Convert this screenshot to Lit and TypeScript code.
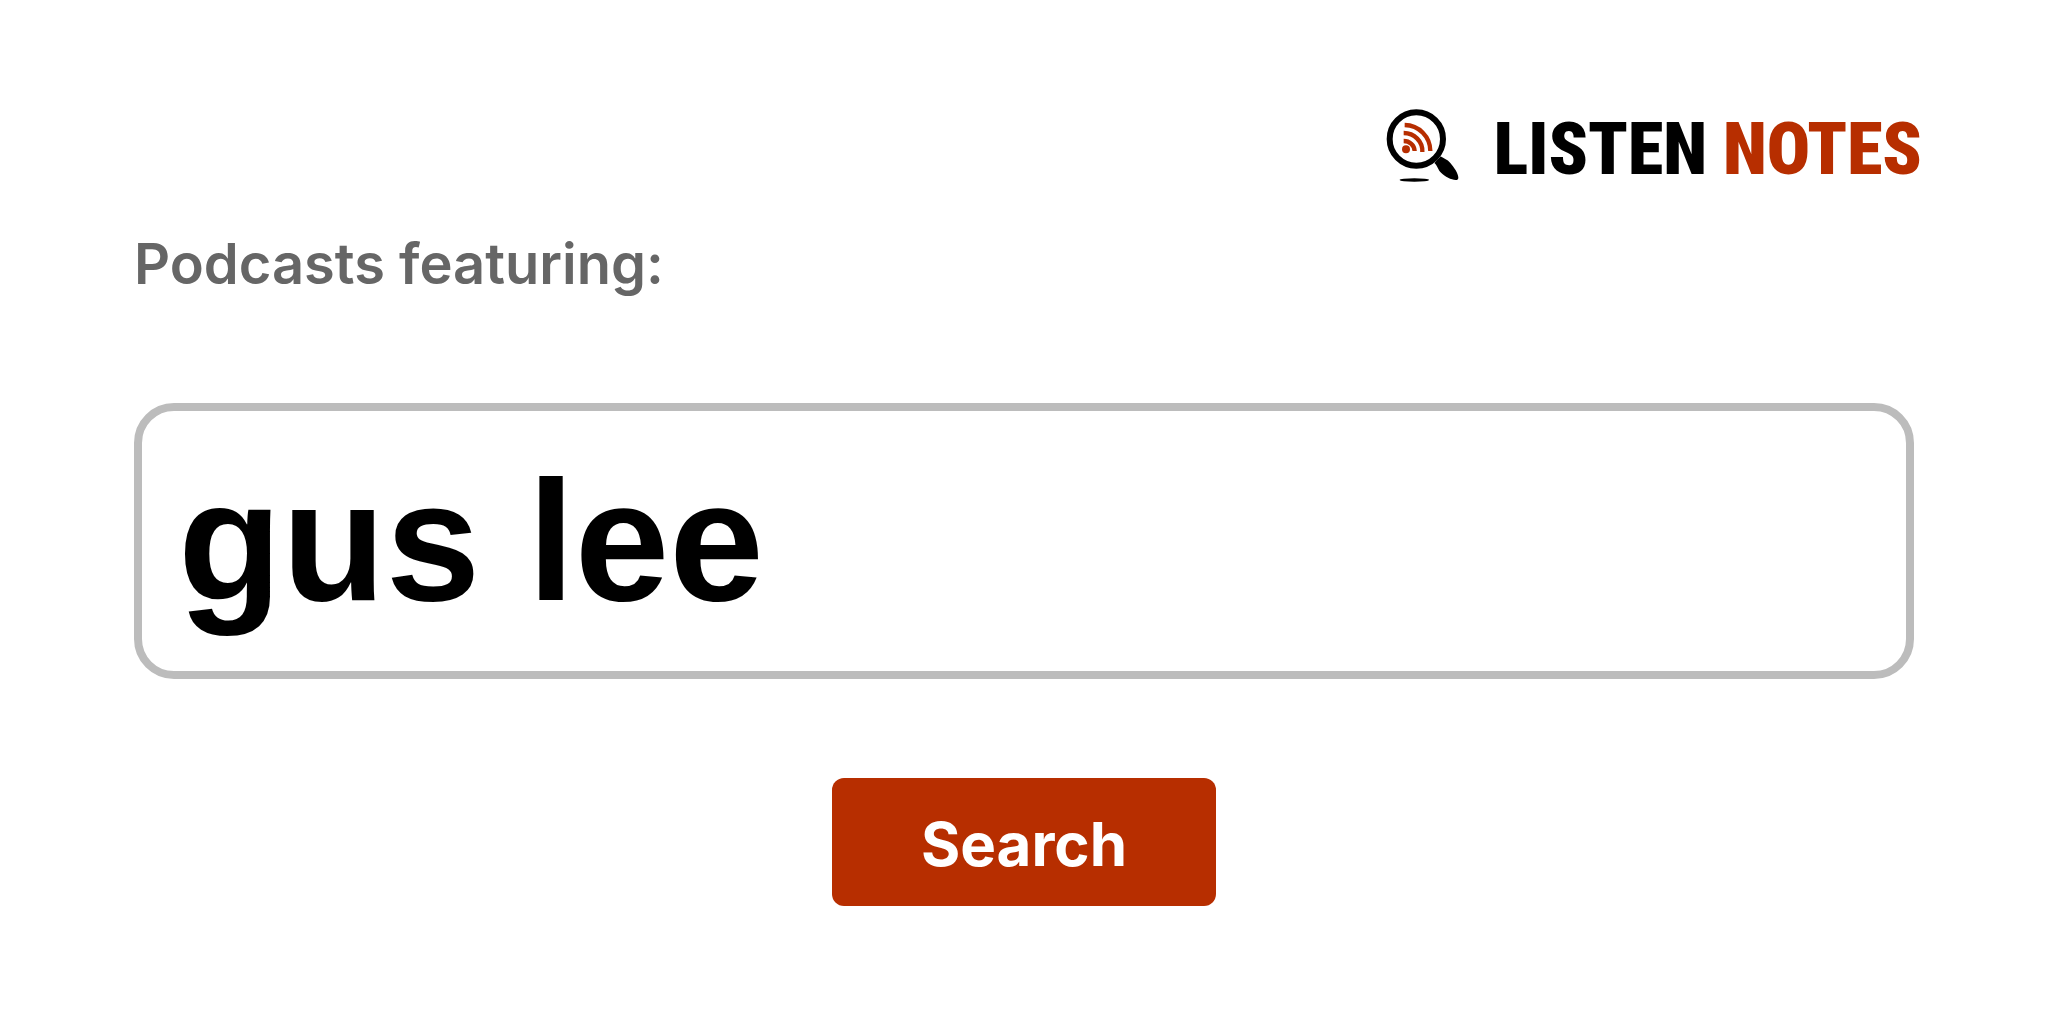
import { LitElement, html, css } from "lit";
import { customElement, state } from "lit/decorators.js";

@customElement("brand-logo")
export class BrandLogo extends LitElement {
  static styles = css`
    :host {
      display: block;
    }
    .brand {
      display: flex;
      align-items: center;
      gap: 34px;
      color: #000;
      text-decoration: none;
    }
    .mark {
      display: block;
      width: 74px;
      height: 74px;
      flex: none;
    }
    .name {
      display: flex;
      gap: 16px;
      padding-top: 10px;
      font: 900 72px/72px "Roboto Condensed", Roboto, "Liberation Sans", sans-serif;
      white-space: nowrap;
    }
    .accent {
      color: #b72e00;
    }
  `;

  render() {
    return html`
      <a class="brand" href="#">
        <svg class="mark" viewBox="40 39 222 222" aria-hidden="true">
          <circle cx="131" cy="132" r="80" fill="none" stroke="#000" stroke-width="18" />
          <path
            d="M185 204 L204 184 C211 190 224 193 233 204 C244 217 257 235 257 248 Q257 255 249 255 C236 255 216 244 206 234 C195 224 195 212 185 204 Z"
            fill="#000"
          />
          <ellipse cx="125" cy="255" rx="44" ry="5" fill="#000" />
          <g fill="none" stroke="#b72e00" stroke-width="13">
            <path d="M96 90 A78 78 0 0 1 173 168" />
            <path d="M93 114 A56 54 0 0 1 149 171" />
            <path d="M93 138 A33 31 0 0 1 126 168" />
          </g>
          <circle cx="100" cy="163" r="12" fill="#b72e00" />
        </svg>
        <span class="name"><span>LISTEN</span><span class="accent">NOTES</span></span>
      </a>
    `;
  }
}

@customElement("app-root")
export class AppRoot extends LitElement {
  static styles = css`
    :host {
      display: block;
      min-height: 100vh;
      background: #fff;
      font-family: Inter, "Liberation Sans", sans-serif;
    }
    * {
      box-sizing: border-box;
    }
    .header {
      display: flex;
      justify-content: flex-end;
      padding: 104px 126px 0;
    }
    .search {
      display: flex;
      flex-direction: column;
      padding: 46px 134px 96px;
    }
    .label {
      color: #666;
      font-size: 56px;
      font-weight: 600;
      line-height: 64px;
    }
    .query {
      width: 100%;
      margin-top: 107px;
      padding: 0 36px;
      height: 276px;
      border: 8px solid #bcbcbc;
      border-radius: 40px;
      outline: none;
      background: #fff;
      color: #000;
      font-family: "Liberation Sans", Arial, sans-serif;
      font-size: 170px;
      font-weight: 700;
    }
    .submit {
      align-self: center;
      margin-top: 99px;
      padding: 30px 89px 26px;
      border: 0;
      border-radius: 12px;
      background: #b72e00;
      color: #fff;
      font: inherit;
      font-size: 60px;
      font-weight: 700;
      line-height: 72px;
      cursor: pointer;
    }
  `;

  @state() private query = "gus lee";

  private onInput(event: Event) {
    this.query = (event.target as HTMLInputElement).value;
  }

  render() {
    return html`
      <header class="header"><brand-logo></brand-logo></header>
      <form class="search" @submit=${(e: Event) => e.preventDefault()}>
        <label class="label" for="query">Podcasts featuring:</label>
        <input
          class="query"
          id="query"
          type="text"
          autocomplete="off"
          spellcheck="false"
          .value=${this.query}
          @input=${this.onInput}
        />
        <button class="submit" type="submit">Search</button>
      </form>
    `;
  }
}
